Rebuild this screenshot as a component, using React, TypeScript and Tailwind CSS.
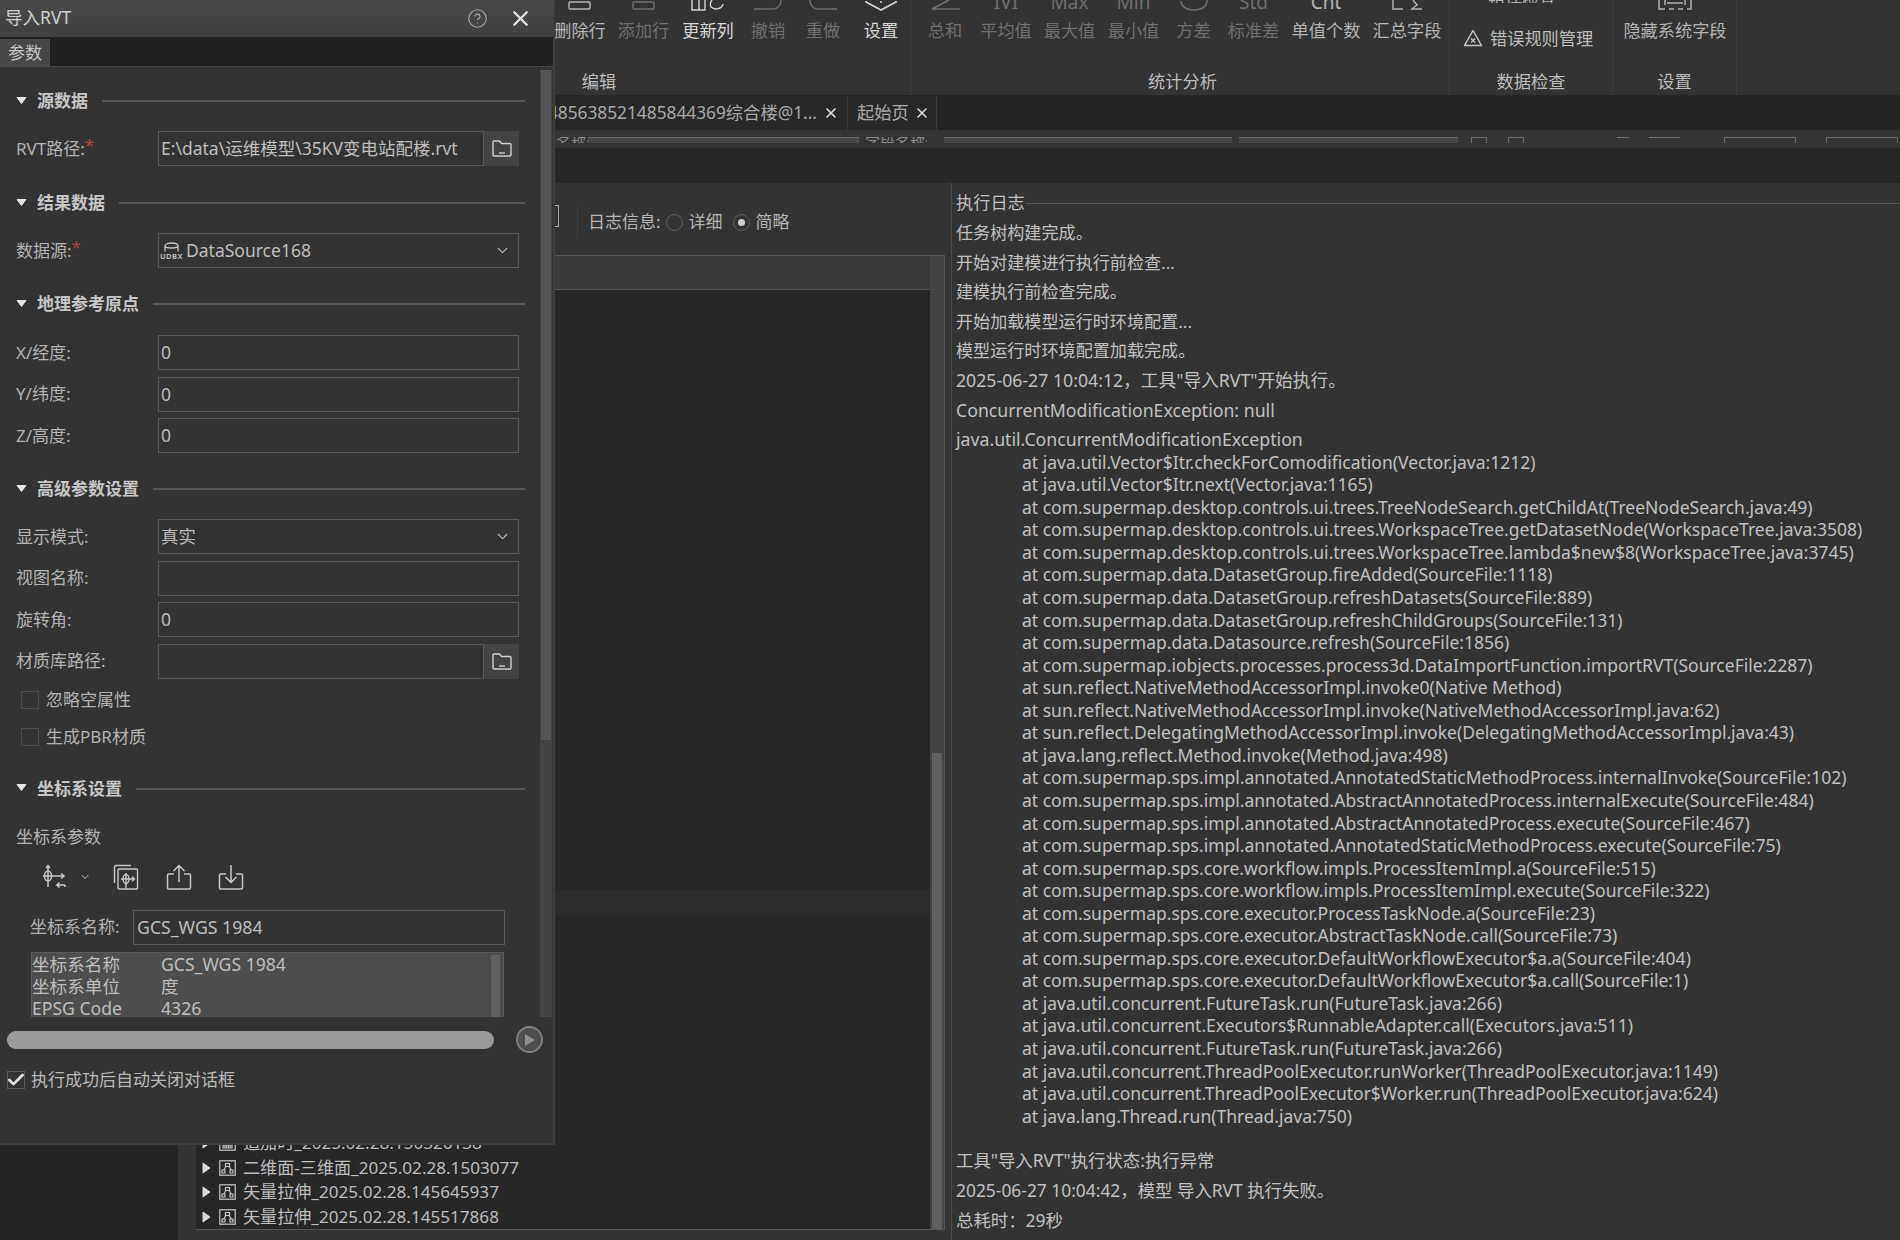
import { Check, ChevronDown, CircleHelp, X } from "lucide-react";
import type { ReactNode } from "react";

const editItems: { label: string; w: string; dim?: boolean; bright?: boolean; icon: ReactNode }[] = [
  { label: "删除行", w: "w-[64px]", icon: <RowIcon /> },
  { label: "添加行", w: "w-[63px]", dim: true, icon: <RowIcon /> },
  { label: "更新列", w: "w-[66px]", bright: true, icon: <ColumnIcon /> },
  { label: "撤销", w: "w-[54px]", dim: true, icon: <UndoIcon /> },
  { label: "重做", w: "w-[56px]", dim: true, icon: <UndoIcon flip /> },
  { label: "设置", w: "w-[60px]", bright: true, icon: <HexIcon /> },
];

const statItems: { label: string; w: string; dim?: boolean; icon: ReactNode }[] = [
  { label: "总和", w: "w-[68px]", dim: true, icon: <SumIcon /> },
  { label: "平均值", w: "w-[54px]", dim: true, icon: <CutText text="IVI" /> },
  { label: "最大值", w: "w-[73px]", dim: true, icon: <CutText text="Max" /> },
  { label: "最小值", w: "w-[55px]", dim: true, icon: <CutText text="Min" /> },
  { label: "方差", w: "w-[65px]", dim: true, icon: <VarIcon /> },
  { label: "标准差", w: "w-[55px]", dim: true, icon: <CutText text="Std" /> },
  { label: "单值个数", w: "w-[90px]", icon: <CutText text="Cnt" /> },
  { label: "汇总字段", w: "w-[72px]", icon: <GroupSumIcon /> },
];

const stackLines = [
  "java.util.Vector$Itr.checkForComodification(Vector.java:1212)",
  "java.util.Vector$Itr.next(Vector.java:1165)",
  "com.supermap.desktop.controls.ui.trees.TreeNodeSearch.getChildAt(TreeNodeSearch.java:49)",
  "com.supermap.desktop.controls.ui.trees.WorkspaceTree.getDatasetNode(WorkspaceTree.java:3508)",
  "com.supermap.desktop.controls.ui.trees.WorkspaceTree.lambda$new$8(WorkspaceTree.java:3745)",
  "com.supermap.data.DatasetGroup.fireAdded(SourceFile:1118)",
  "com.supermap.data.DatasetGroup.refreshDatasets(SourceFile:889)",
  "com.supermap.data.DatasetGroup.refreshChildGroups(SourceFile:131)",
  "com.supermap.data.Datasource.refresh(SourceFile:1856)",
  "com.supermap.iobjects.processes.process3d.DataImportFunction.importRVT(SourceFile:2287)",
  "sun.reflect.NativeMethodAccessorImpl.invoke0(Native Method)",
  "sun.reflect.NativeMethodAccessorImpl.invoke(NativeMethodAccessorImpl.java:62)",
  "sun.reflect.DelegatingMethodAccessorImpl.invoke(DelegatingMethodAccessorImpl.java:43)",
  "java.lang.reflect.Method.invoke(Method.java:498)",
  "com.supermap.sps.impl.annotated.AnnotatedStaticMethodProcess.internalInvoke(SourceFile:102)",
  "com.supermap.sps.impl.annotated.AbstractAnnotatedProcess.internalExecute(SourceFile:484)",
  "com.supermap.sps.impl.annotated.AbstractAnnotatedProcess.execute(SourceFile:467)",
  "com.supermap.sps.impl.annotated.AnnotatedStaticMethodProcess.execute(SourceFile:75)",
  "com.supermap.sps.core.workflow.impls.ProcessItemImpl.a(SourceFile:515)",
  "com.supermap.sps.core.workflow.impls.ProcessItemImpl.execute(SourceFile:322)",
  "com.supermap.sps.core.executor.ProcessTaskNode.a(SourceFile:23)",
  "com.supermap.sps.core.executor.AbstractTaskNode.call(SourceFile:73)",
  "com.supermap.sps.core.executor.DefaultWorkflowExecutor$a.a(SourceFile:404)",
  "com.supermap.sps.core.executor.DefaultWorkflowExecutor$a.call(SourceFile:1)",
  "java.util.concurrent.FutureTask.run(FutureTask.java:266)",
  "java.util.concurrent.Executors$RunnableAdapter.call(Executors.java:511)",
  "java.util.concurrent.FutureTask.run(FutureTask.java:266)",
  "java.util.concurrent.ThreadPoolExecutor.runWorker(ThreadPoolExecutor.java:1149)",
  "java.util.concurrent.ThreadPoolExecutor$Worker.run(ThreadPoolExecutor.java:624)",
  "java.lang.Thread.run(Thread.java:750)",
];

const topLog = [
  { text: "任务树构建完成。" },
  { text: "开始对建模进行执行前检查..." },
  { text: "建模执行前检查完成。" },
  { text: "开始加载模型运行时环境配置..." },
  { text: "模型运行时环境配置加载完成。" },
  { text: "2025-06-27 10:04:12，工具\"导入RVT\"开始执行。", latin: true },
  { text: "ConcurrentModificationException: null", latin: true },
  { text: "java.util.ConcurrentModificationException", latin: true },
];

function RowIcon() {
  return (
    <svg width="24" height="10" viewBox="0 0 24 10" fill="none" stroke="currentColor" strokeWidth="1.5">
      <rect x="1" y="2" width="21" height="7" rx="1" />
    </svg>
  );
}

function ColumnIcon() {
  return (
    <svg width="34" height="11" viewBox="0 0 34 11" fill="none" stroke="currentColor" strokeWidth="1.4">
      <path d="M1 0v10h7V0M8 10h6V0" />
      <path d="M32 4a7 6 0 0 1-12 3 7 7 0 0 1 1-7" />
    </svg>
  );
}

function UndoIcon({ flip }: { flip?: boolean }) {
  return (
    <svg width="30" height="10" viewBox="0 0 30 10" fill="none" stroke="currentColor" strokeWidth="1.5" className={flip ? "-scale-x-100" : ""}>
      <path d="M1 9h19c5 0 8-4 8-9" />
    </svg>
  );
}

function HexIcon() {
  return (
    <svg width="32" height="11" viewBox="0 0 32 11" fill="none" stroke="currentColor" strokeWidth="1.6">
      <path d="M1 1v1l15 8 15-8V1" />
      <circle cx="16" cy="2" r="1" fill="currentColor" stroke="none" />
    </svg>
  );
}

function SumIcon() {
  return (
    <svg width="32" height="10" viewBox="0 0 32 10" fill="none" stroke="currentColor" strokeWidth="1.5">
      <path d="M20 0 3 9h28" />
    </svg>
  );
}

function VarIcon() {
  return (
    <svg width="30" height="11" viewBox="0 0 30 11" fill="none" stroke="currentColor" strokeWidth="1.5">
      <path d="M2 1c0 5 5 9 12 9h2c7 0 12-4 12-9V0" />
    </svg>
  );
}

function GroupSumIcon() {
  return (
    <svg width="32" height="10" viewBox="0 0 32 10" fill="none" stroke="currentColor" strokeWidth="1.5">
      <path d="M2 0v9h10M31 9H21l5-4-4-5" />
    </svg>
  );
}

function HideIcon() {
  return (
    <svg width="34" height="10" viewBox="0 0 34 10" fill="none" stroke="currentColor" strokeWidth="1.5">
      <path d="M1 0v9h6M11 9h5M20 9h5M29 9h4V0M9 3h16" />
      <path d="M7 0v5M27 0v5" />
    </svg>
  );
}

// 被裁掉上半部分的图标文字
function CutText({ text }: { text: string }) {
  return (
    <div className="flex h-[10px] items-end overflow-hidden">
      <span className="mb-[-2px] text-[19px] leading-none">{text}</span>
    </div>
  );
}

function RibbonItem({ label, w, dim, bright, icon }: { label: string; w: string; dim?: boolean; bright?: boolean; icon: ReactNode }) {
  return (
    <div className={`flex shrink-0 flex-col items-center ${w} ${dim ? "text-[#6f6f6f]" : bright ? "text-[#d6d6d6]" : "text-[#b4b4b4]"}`}>
      <div className="flex h-[11px] items-start justify-center overflow-hidden">{icon}</div>
      <div className="mt-[9px] text-[17.2px] leading-[22px] whitespace-nowrap">{label}</div>
    </div>
  );
}

function Ribbon() {
  return (
    <div className="flex h-[95px] shrink-0 bg-[#333333] text-[#bdbdbd]">
      <div className="flex w-[911px] shrink-0 flex-col border-r border-[#3d3d3d] pl-[548px]">
        <div className="flex h-[71px]">
          {editItems.map((it) => (
            <RibbonItem key={it.label} {...it} />
          ))}
        </div>
        <div className="w-[102px] text-center text-[17.2px] leading-[22px]">编辑</div>
      </div>
      <div className="flex w-[539px] shrink-0 flex-col border-r border-[#3d3d3d]">
        <div className="flex h-[71px]">
          {statItems.map((it) => (
            <RibbonItem key={it.label} {...it} />
          ))}
        </div>
        <div className="w-[543px] text-center text-[17.2px] leading-[22px]">统计分析</div>
      </div>
      <div className="flex w-[163px] shrink-0 flex-col border-r border-[#3d3d3d]">
        <div className="h-[3px] overflow-hidden pl-[38px] text-[17px] leading-[0px] text-[#b4b4b4]">错误检查</div>
        <div className="mt-[26px] flex h-[42px] items-start pl-[13px]">
          <svg width="20" height="18" viewBox="0 0 20 18" fill="none" stroke="#c4c4c4" strokeWidth="1.5" strokeLinejoin="round">
            <path d="M10 1.5 18.5 16.5H1.5Z" />
            <path d="M8 9.5l4 4M12 9.5l-4 4" strokeWidth="1.2" />
          </svg>
          <span className="ml-[7px] text-[17.2px] leading-[20px] whitespace-nowrap text-[#bdbdbd]">错误规则管理</span>
        </div>
        <div className="text-center text-[17.2px] leading-[22px]">数据检查</div>
      </div>
      <div className="flex w-[124px] shrink-0 flex-col border-r border-[#3d3d3d]">
        <div className="flex h-[71px]">
          <RibbonItem label="隐藏系统字段" w="w-[124px]" icon={<HideIcon />} />
        </div>
        <div className="text-center text-[17.2px] leading-[22px]">设置</div>
      </div>
    </div>
  );
}

function TabBar() {
  return (
    <div className="flex h-[35px] shrink-0 bg-[#252525] pt-[1px] text-[17.3px] text-[#a9a9a9]">
      <div className="flex w-[848px] shrink-0 items-center justify-end border-r border-[#393939] bg-[#282828] pr-[8px]">
        <span className="whitespace-nowrap">485638521485844369综合楼@1...</span>
        <X size={16} strokeWidth={2.4} className="ml-[6px] text-[#e0e0e0]" />
      </div>
      <div className="flex w-[89px] shrink-0 items-center border-r border-[#393939] bg-[#282828] pl-[9px]">
        <span>起始页</span>
        <X size={16} strokeWidth={2.4} className="ml-[5px] text-[#e0e0e0]" />
      </div>
    </div>
  );
}

// 被遮挡只露出一条的工具行
function CutToolbar() {
  const frag = "h-[6px] shrink-0 border-t border-[#6a6a6a]";
  return (
    <div className="flex h-[18px] shrink-0 items-start overflow-hidden bg-[#343434] pt-[7px] pl-[556px] text-[15px] leading-[10px] text-[#8a8a8a]">
      <div className="h-[6px] w-[32px] shrink-0 overflow-hidden whitespace-nowrap">名称:</div>
      <div className={`w-[271px] bg-[#474747] ${frag}`} />
      <div className="ml-[6px] h-[6px] w-[62px] shrink-0 overflow-hidden whitespace-nowrap">字段名称:</div>
      <div className={`ml-[17px] w-[288px] bg-[#474747] ${frag}`} />
      <div className={`ml-[7px] w-[219px] bg-[#474747] ${frag}`} />
      <div className={`ml-[13px] w-[16px] border-x ${frag}`} />
      <div className={`ml-[21px] w-[16px] border-x ${frag}`} />
      <div className={`ml-[93px] w-[12px] ${frag}`} />
      <div className={`ml-[20px] w-[31px] ${frag}`} />
      <div className={`ml-[44px] w-[72px] border-x ${frag}`} />
      <div className={`ml-[30px] w-[72px] border-x ${frag}`} />
    </div>
  );
}

function TreeIcon({ grid }: { grid?: boolean }) {
  return (
    <svg width="17" height="16" viewBox="0 0 17 16" fill="none" stroke="#c8c8c8" strokeWidth="1.2" className="shrink-0">
      <rect x="0.8" y="0.8" width="15.4" height="14.4" />
      {grid ? (
        <path d="M4 5h2v3H4zM7.5 5h2v3h-2zM11 5h2v3h-2zM4 10h2v3H4zM7.5 10h2v3h-2zM11 10h2v3h-2z" />
      ) : (
        <path d="M6.5 3.5h4v3h-4zM3 10h3v3H3zM11 10h3v3h-3zM7 6.5 4.5 10M10 6.5l2.5 3.5" />
      )}
    </svg>
  );
}

function TreeRow({ text, grid }: { text: string; grid?: boolean }) {
  return (
    <div className="flex h-[24.6px] items-center">
      <svg width="9" height="12" viewBox="0 0 9 12" className="mr-[8px] ml-[6px] shrink-0" fill="#d8d8d8">
        <path d="M1 1l7 5-7 5z" stroke="#d8d8d8" strokeLinejoin="round" />
      </svg>
      <TreeIcon grid={grid} />
      <span className="ml-[7px] text-[17.1px] whitespace-nowrap text-[#bcbcbc]">{text}</span>
    </div>
  );
}

function WorkArea() {
  return (
    <div className="flex min-h-0 flex-1">
      <div className="w-[178px] shrink-0 bg-[#252525]" />
      <div className="flex w-[767px] shrink-0 flex-col pl-[18px]">
        <div className="flex h-[72px] shrink-0 items-center text-[17px] text-[#b4b4b4]">
          <div className="mt-[-6px] ml-[359px] h-[22px] w-[4px] border-y border-r border-[#a8a8a8]" />
          <div className="mt-[6px] ml-[18px] h-[34px] border-l border-[#3f3f3f] pl-[10px] leading-[34px] whitespace-nowrap">日志信息:</div>
          <div className="mt-[6px] ml-[5px] flex items-center">
            <span className="h-[17px] w-[17px] rounded-full border border-[#5f5f5f]" />
            <span className="ml-[6px]">详细</span>
            <span className="ml-[10px] flex h-[17px] w-[17px] items-center justify-center rounded-full border border-[#5f5f5f]">
              <span className="h-[7px] w-[7px] rounded-full bg-[#cfcfcf]" />
            </span>
            <span className="ml-[6px]">简略</span>
          </div>
        </div>
        <div className="flex min-h-0 flex-1 flex-col border-b border-[#555555]">
          <div className="flex min-h-0 flex-1">
            <div className="flex w-[734px] shrink-0 flex-col">
              <div className="h-[35px] shrink-0 border-y border-[#555555] bg-[#3b3b3b]" />
              <div className="flex min-h-0 flex-1 flex-col bg-[#272727]">
                <div className="mt-[600px] h-[25px] shrink-0 bg-[#2c2c2c]" />
                <div className="mt-auto overflow-hidden">
                  <div className="w-[324px] overflow-hidden">
                    <TreeRow grid text="追加时_2025.02.28.150326138" />
                    <TreeRow text="二维面-三维面_2025.02.28.1503077" />
                    <TreeRow text="矢量拉伸_2025.02.28.145645937" />
                    <TreeRow text="矢量拉伸_2025.02.28.145517868" />
                  </div>
                </div>
              </div>
            </div>
            <div className="flex w-[15px] shrink-0 flex-col border-t border-r border-[#555555] bg-[#444444] pr-[2px] pl-[2px]">
              <div className="mt-auto h-[476px] bg-[#606060]" />
            </div>
          </div>
        </div>
        <div className="h-[10px] shrink-0" />
      </div>
      <div className="ml-[6px] min-w-0 flex-1 border-l border-[#4c4c4c] pt-[10px] text-[#c0c0c0]">
        <div className="flex items-center text-[17.2px] leading-[20px]">
          <span className="h-px w-[3px] bg-[#565656]" />
          <span className="px-[1px] whitespace-nowrap">执行日志</span>
          <span className="h-px flex-1 bg-[#565656]" />
        </div>
        <div className="mt-[5px] pl-[4px]">
          <div className="leading-[29.6px]">
            {topLog.map((l) => (
              <div key={l.text} className={`whitespace-nowrap ${l.latin ? "text-[17.7px]" : "text-[17.1px]"}`}>{l.text}</div>
            ))}
          </div>
          <div className="mt-[-4px] pl-[66px] text-[17.5px] leading-[22.55px]">
            {stackLines.map((l, i) => (
              <div key={i} className="whitespace-nowrap">at {l}</div>
            ))}
          </div>
          <div className="mt-[18px] text-[17.4px] leading-[30px]">
            <div>工具"导入RVT"执行状态:执行异常</div>
            <div>2025-06-27 10:04:42，模型 导入RVT 执行失败。</div>
            <div>总耗时：29秒</div>
          </div>
        </div>
      </div>
    </div>
  );
}

function SectionHead({ title }: { title: string }) {
  return (
    <div className="flex h-[24px] items-center pr-[15px] pl-[16px]">
      <svg width="11" height="9" viewBox="0 0 11 9" className="mb-[2px] shrink-0" fill="#e4e4e4">
        <path d="M1 1.5h9L5.5 7.5Z" stroke="#e4e4e4" strokeLinejoin="round" />
      </svg>
      <span className="ml-[10px] text-[17px] font-bold whitespace-nowrap text-[#c6c6c6]">{title}</span>
      <span className="ml-[14px] h-[2px] flex-1 bg-[#565656]" />
    </div>
  );
}

function FolderIcon() {
  return (
    <svg width="20" height="17" viewBox="0 0 20 17" fill="none" stroke="#cfcfcf" strokeWidth="1.4" strokeLinejoin="round">
      <path d="M1 2a1 1 0 0 1 1-1h5.5l2 2.5H18a1 1 0 0 1 1 1V15a1 1 0 0 1-1 1H2a1 1 0 0 1-1-1Z" />
      <path d="M7 13h6" />
    </svg>
  );
}

function Field({ label, req, children }: { label: string; req?: boolean; children: ReactNode }) {
  return (
    <div className="flex h-[35px] items-center pl-[16px] text-[17.5px]">
      <div className="w-[142px] shrink-0 text-[17px] whitespace-nowrap text-[#b2b2b2]">
        {label}
        {req && <span className="relative top-[-4px] text-[#b5413a]">*</span>}
      </div>
      {children}
    </div>
  );
}

function TextBox({ value, short }: { value?: string; short?: boolean }) {
  return (
    <div className={`flex h-full items-center border border-[#585858] px-[2px] whitespace-nowrap text-[#bdbdbd] ${short ? "w-[326px]" : "w-[361px]"}`}>
      {value}
    </div>
  );
}

function FolderBtn() {
  return (
    <div className="flex h-full w-[35px] items-center justify-center bg-[#434343]">
      <FolderIcon />
    </div>
  );
}

function ComboBox({ children }: { children: ReactNode }) {
  return (
    <div className="flex h-full w-[361px] items-center justify-between border border-[#585858] pr-[7px] pl-[2px] text-[#bdbdbd]">
      <div className="flex items-center">{children}</div>
      <ChevronDown size={17} strokeWidth={1.6} className="text-[#c4c4c4]" />
    </div>
  );
}

function CheckRow({ label, className }: { label: string; className: string }) {
  return (
    <div className={`flex h-[18px] items-center pl-[21px] text-[17px] text-[#b2b2b2] ${className}`}>
      <span className="h-[18px] w-[18px] shrink-0 border border-[#4d4d4d]" />
      <span className="ml-[7px] whitespace-nowrap">{label}</span>
    </div>
  );
}

function CoordTools() {
  return (
    <div className="mt-[17px] flex h-[26px] items-center pl-[42px] text-[#c8c8c8]">
      <svg width="26" height="26" viewBox="0 0 26 26" fill="none" stroke="currentColor" strokeWidth="1.5">
        <ellipse cx="6" cy="12" rx="3.5" ry="5" />
        <path d="M6 2v21M1 12h21M19 9.5l3 2.5-3 2.5M4 4l2-2.5L8 4" />
        <path d="M23 21h-8l2.5-2.5M15 21l2.5 2.5M23 21v2" />
      </svg>
      <ChevronDown size={12} strokeWidth={2} className="ml-[11px]" />
      <svg width="26" height="26" viewBox="0 0 26 26" fill="none" stroke="currentColor" strokeWidth="1.4" className="ml-[22px]">
        <path d="M18 1.5H3a1.5 1.5 0 0 0-1.500 1.500V19" />
        <rect x="5" y="5" width="19.500" height="20" rx="1" />
        <ellipse cx="13" cy="15" rx="3" ry="4.500" />
        <path d="M13 9v16M8 15h13M19 12.500l2.500 2.500-2.500 2.500" />
      </svg>
      <svg width="26" height="26" viewBox="0 0 26 26" fill="none" stroke="currentColor" strokeWidth="1.5" className="ml-[27px]">
        <path d="M8 10H2.500a1 1 0 0 0-1 1v13a1 1 0 0 0 1 1h21a1 1 0 0 0 1-1V11a1 1 0 0 0-1-1H18" />
        <path d="M13 18V2M7.500 7 13 1.500 18.500 7" />
      </svg>
      <svg width="26" height="26" viewBox="0 0 26 26" fill="none" stroke="currentColor" strokeWidth="1.5" className="ml-[26px]">
        <path d="M8 10H2.500a1 1 0 0 0-1 1v13a1 1 0 0 0 1 1h21a1 1 0 0 0 1-1V11a1 1 0 0 0-1-1H18" />
        <path d="M13 1v17M7.500 13 13 18.500 18.500 13" />
      </svg>
    </div>
  );
}

function ImportDialog() {
  return (
    <div className="absolute top-0 left-0 z-10 flex h-[1145px] w-[555px] flex-col border-r-2 border-b-2 border-[#3e3e3e] bg-[#333333]">
      <div className="flex h-[37px] shrink-0 items-center bg-gradient-to-b from-[#4a4a4a] to-[#404040] pl-[5px] text-[17.5px] text-[#cfcfcf]">
        <span className="mt-[-2px]">导入RVT</span>
        <CircleHelp size={21} strokeWidth={1.3} className="ml-auto text-[#a6a6a6]" />
        <X size={25} strokeWidth={2.2} className="mr-[20px] ml-[20px] text-[#e6e6e6]" />
      </div>
      <div className="flex h-[30px] shrink-0 items-end border-b border-[#474747] bg-[#202020]">
        <div className="flex h-[27px] w-[50px] items-center justify-center bg-[#474747] text-[17px] text-[#c4c4c4]">参数</div>
      </div>
      <div className="mt-[3px] flex h-[947px] shrink-0 overflow-hidden">
        <div className="w-[540px] shrink-0 pt-[19px]">
          <SectionHead title="源数据" />
          <div className="mt-[18px]">
            <Field label="RVT路径:" req>
              <TextBox short value="E:\data\运维模型\35KV变电站配楼.rvt" />
              <FolderBtn />
            </Field>
          </div>
          <div className="mt-[25px]">
            <SectionHead title="结果数据" />
          </div>
          <div className="mt-[18px]">
            <Field label="数据源:" req>
              <ComboBox>
                <div className="flex w-[21px] flex-col items-center">
                  <svg width="17" height="10" viewBox="0 0 17 10" fill="none" stroke="#c8c8c8" strokeWidth="1.300">
                    <path d="M2 9.500V4c0-4 13-4 13 0v5.500M2 4.500c2 2 11 2 13 0" />
                  </svg>
                  <span className="text-[7.500px] leading-[8px] font-bold tracking-[0.5px]">UDBX</span>
                </div>
                <span className="ml-[4px]">DataSource168</span>
              </ComboBox>
            </Field>
          </div>
          <div className="mt-[24px]">
            <SectionHead title="地理参考原点" />
          </div>
          <div className="mt-[19px] flex flex-col gap-[6.5px]">
            <Field label="X/经度:"><TextBox value="0" /></Field>
            <Field label="Y/纬度:"><TextBox value="0" /></Field>
            <Field label="Z/高度:"><TextBox value="0" /></Field>
          </div>
          <div className="mt-[24px]">
            <SectionHead title="高级参数设置" />
          </div>
          <div className="mt-[18px] flex flex-col gap-[6.5px]">
            <Field label="显示模式:"><ComboBox>真实</ComboBox></Field>
            <Field label="视图名称:"><TextBox /></Field>
            <Field label="旋转角:"><TextBox value="0" /></Field>
            <Field label="材质库路径:">
              <TextBox short />
              <FolderBtn />
            </Field>
          </div>
          <CheckRow label="忽略空属性" className="mt-[12px]" />
          <CheckRow label="生成PBR材质" className="mt-[19px]" />
          <div className="mt-[31px]">
            <SectionHead title="坐标系设置" />
          </div>
          <div className="mt-[26px] pl-[16px] text-[17px] leading-[20px] text-[#b2b2b2]">坐标系参数</div>
          <CoordTools />
          <div className="mt-[20px] flex h-[35px] items-center pl-[30px]">
            <div className="w-[103px] shrink-0 text-[17px] whitespace-nowrap text-[#b2b2b2]">坐标系名称:</div>
            <div className="flex h-full w-[372px] items-center border border-[#585858] px-[3px] text-[17.7px] text-[#bdbdbd]">GCS_WGS 1984</div>
          </div>
          <div className="mt-[7px] ml-[31px] flex h-[74px] w-[473px] border border-[#5c5c5c] bg-[#4d4d4d] text-[17.6px] leading-[22px] text-[#bdbdbd]">
            <div className="flex-1">
              <div className="flex"><span className="w-[129px]">坐标系名称</span><span>GCS_WGS 1984</span></div>
              <div className="flex"><span className="w-[129px]">坐标系单位</span><span>度</span></div>
              <div className="flex"><span className="w-[129px]">EPSG Code</span><span>4326</span></div>
            </div>
            <div className="mt-[2px] mr-[3px] w-[9px] bg-[#606060]" />
          </div>
        </div>
        <div className="flex w-[12px] shrink-0 flex-col bg-[#454545]">
          <div className="mx-px h-[670px] bg-[#565656]" />
        </div>
      </div>
      <div className="mt-[9px] flex h-[27px] shrink-0 items-center pl-[7px]">
        <div className="h-[18px] w-[487px] rounded-full bg-[#9a9a9a]" />
        <div className="ml-[22px] flex h-[27px] w-[27px] items-center justify-center rounded-full border-2 border-[#7f7f7f] bg-[#4e4e4e]">
          <svg width="12" height="14" viewBox="0 0 12 14" fill="#8e8e8e">
            <path d="M1 1l10 6-10 6z" />
          </svg>
        </div>
      </div>
      <div className="mt-[18px] flex h-[18px] items-center pl-[7px] text-[17px] text-[#b8b8b8]">
        <span className="flex h-[18px] w-[18px] items-center justify-center border border-[#585858]">
          <Check size={20} strokeWidth={3.2} className="shrink-0 text-[#e4e4e4]" />
        </span>
        <span className="ml-[6px] whitespace-nowrap">执行成功后自动关闭对话框</span>
      </div>
    </div>
  );
}

export default function App() {
  return (
    <div className="relative flex h-[1240px] w-[1900px] flex-col overflow-hidden bg-[#333333] font-['Noto_Sans','Noto_Sans_CJK_SC',sans-serif]">
      <Ribbon />
      <TabBar />
      <CutToolbar />
      <div className="h-[35px] shrink-0 bg-[#272727]" />
      <WorkArea />
      <ImportDialog />
    </div>
  );
}
